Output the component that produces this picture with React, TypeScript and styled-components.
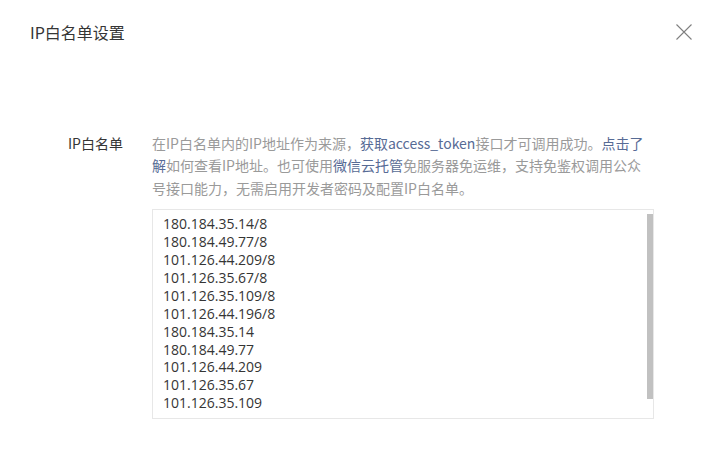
import React from "react";
import styled, { createGlobalStyle } from "styled-components";

const GlobalStyle = createGlobalStyle`
  html, body {
    margin: 0;
    padding: 0;
    background: #ffffff;
  }
  body {
    font-family: "Noto Sans CJK SC", "Noto Sans", sans-serif;
    -webkit-font-smoothing: antialiased;
  }
`;

const Dialog = styled.div`
  width: 716px;
  height: 457px;
  box-sizing: border-box;
  background: #ffffff;
  display: flex;
  flex-direction: column;
`;

const Header = styled.div`
  height: 64px;
  display: flex;
  align-items: center;
  justify-content: space-between;
  padding: 0 24px 0 30px;
`;

const Title = styled.h3`
  margin: 0;
  font-size: 16px;
  font-weight: 400;
  color: #353535;
`;

const CloseButton = styled.button`
  width: 16px;
  height: 16px;
  padding: 0;
  border: none;
  background: none;
  cursor: pointer;
  display: flex;
  svg {
    display: block;
  }
`;

const Body = styled.div`
  padding: 68px 0 0 68px;
`;

const FormRow = styled.div`
  display: grid;
  grid-template-columns: 84px 502px;
`;

const Label = styled.label`
  font-size: 14px;
  line-height: 22.4px;
  color: #353535;
`;

const Content = styled.div`
  display: flex;
  flex-direction: column;
`;

const Desc = styled.p`
  margin: 0;
  font-size: 14px;
  line-height: 22.4px;
  color: #9a9a9a;
`;

const Link = styled.a`
  color: #576b95;
  text-decoration: none;
`;

const IpBox = styled.div`
  margin-top: 10px;
  height: 210px;
  box-sizing: border-box;
  border: 1px solid #e7e7e7;
  display: flex;
`;

const IpList = styled.div`
  flex: 1;
  padding: 5px 10px;
  font-family: "Open Sans", "Noto Sans CJK SC", sans-serif;
  font-size: 14px;
  line-height: 17.9px;
  color: #353535;
`;

const ScrollTrack = styled.div`
  width: 6px;
  padding-top: 4px;
`;

const ScrollThumb = styled.div`
  height: 185px;
  background: #c1c1c1;
`;

const ips = [
  "180.184.35.14/8",
  "180.184.49.77/8",
  "101.126.44.209/8",
  "101.126.35.67/8",
  "101.126.35.109/8",
  "101.126.44.196/8",
  "180.184.35.14",
  "180.184.49.77",
  "101.126.44.209",
  "101.126.35.67",
  "101.126.35.109",
];

export default function App() {
  return (
    <>
      <GlobalStyle />
      <Dialog>
        <Header>
          <Title>IP白名单设置</Title>
          <CloseButton aria-label="关闭">
            <svg width="16" height="16" viewBox="0 0 16 16">
              <path d="M0.5 0.5 L15.5 15.5 M15.5 0.5 L0.5 15.5" stroke="#7f7f7f" strokeWidth="1.1" fill="none" />
            </svg>
          </CloseButton>
        </Header>
        <Body>
          <FormRow>
            <Label>IP白名单</Label>
            <Content>
              <Desc>
                在IP白名单内的IP地址作为来源，<Link href="#">获取access_token</Link>接口才可调用成功。<Link href="#">点击了解</Link>如何查看IP地址。也可使用<Link href="#">微信云托管</Link>免服务器免运维，支持免鉴权调用公众号接口能力，无需启用开发者密码及配置IP白名单。
              </Desc>
              <IpBox>
                <IpList>
                  {ips.map((ip, i) => (
                    <div key={i}>{ip}</div>
                  ))}
                </IpList>
                <ScrollTrack>
                  <ScrollThumb />
                </ScrollTrack>
              </IpBox>
            </Content>
          </FormRow>
        </Body>
      </Dialog>
    </>
  );
}
